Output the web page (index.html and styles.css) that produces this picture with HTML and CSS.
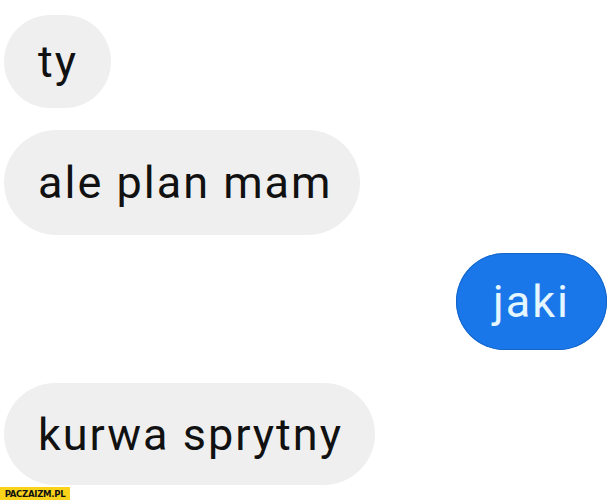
FILE: index.html
```html
<!DOCTYPE html>
<html lang="pl">
<head>
<meta charset="utf-8">
<link rel="stylesheet" href="styles.css">
</head>
<body>
<main class="chat">
  <div class="bubble in b-ty">ty</div>
  <div class="bubble in b-ale">ale plan mam</div>
  <div class="bubble out b-jaki">jaki</div>
  <div class="bubble in b-kurwa">kurwa sprytny</div>
</main>
<div class="watermark">PACZAIZM.PL</div>
</body>
</html>
```
FILE: styles.css
```css
html, body {
  margin: 0;
  padding: 0;
  background: #ffffff;
}
body {
  width: 615px;
  height: 500px;
  position: relative;
  overflow: hidden;
  font-family: Roboto, "Noto Sans", sans-serif;
}
.chat {
  display: flex;
  flex-direction: column;
  padding: 0 8px 0 4px;
}
.bubble {
  display: flex;
  align-items: center;
  font-size: 45px;
  letter-spacing: 2px;
  border-radius: 60px;
  padding: 0 32px 0 34px;
  white-space: nowrap;
}
.in {
  align-self: flex-start;
  background: #efefef;
  color: #111111;
}
.out {
  align-self: flex-end;
  background: #1a77e9;
  color: #e4f6ff;
  padding: 0 37px 0 37px;
  box-shadow: inset 0 0 0 1px #1565c8;
}
.b-ty {
  margin-top: 15px;
  height: 93px;
  padding-right: 33px;
}
.b-ale {
  margin-top: 22px;
  height: 105px;
  padding-right: 27px;
}
.b-jaki {
  margin-top: 18px;
  height: 97px;
}
.b-kurwa {
  margin-top: 33px;
  height: 102px;
}
.watermark {
  position: absolute;
  left: 0;
  bottom: 0;
  width: 70px;
  height: 13px;
  background: #f8d31a;
  color: #111;
  font-family: "DejaVu Sans Condensed", "DejaVu Sans", sans-serif;
  font-weight: bold;
  font-size: 9.5px;
  line-height: 13px;
  text-align: center;
  letter-spacing: -0.3px;
}
```
